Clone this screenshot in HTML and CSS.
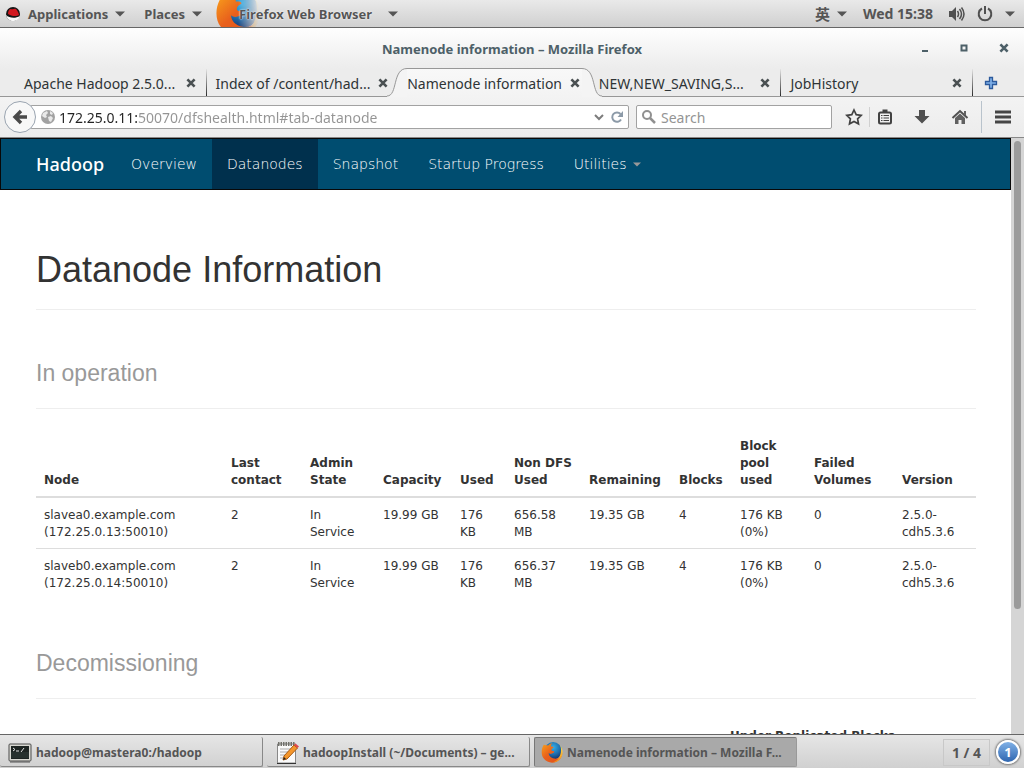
FILE: index.html
```html
<!DOCTYPE html>
<html lang="en">
<head>
<meta charset="utf-8">
<title>Namenode information</title>
<link rel="stylesheet" href="styles.css">
</head>
<body class="desktop">
<svg class="defs" aria-hidden="true">
  <defs>
    <radialGradient id="globe" cx="50%" cy="30%" r="65%"><stop offset="0" stop-color="#35b0e8"/><stop offset=".6" stop-color="#1f6fae"/><stop offset="1" stop-color="#173a74"/></radialGradient>
    <linearGradient id="fox" x1="0" y1="0" x2="1" y2="1"><stop offset="0" stop-color="#f9a11b"/><stop offset=".45" stop-color="#e8601c"/><stop offset="1" stop-color="#e0501a"/></linearGradient>
    <linearGradient id="foxtail" x1="0" y1="0" x2="0" y2="1"><stop offset="0" stop-color="#ffe14a"/><stop offset="1" stop-color="#f08a1c"/></linearGradient>
    <symbol id="firefox" viewBox="0 0 40 40">
      <circle cx="22" cy="18" r="16" fill="url(#globe)"/>
      <path d="M5 7C0 15 0 26 5 32c5 7 15 9 22 6 6-2 11-8 12-16-3 8-9 11-15 10-6-1-10-5-10-10 2 2 5 2 8 0 2-1 2-2 2-3-2-1-4 0-5-2 0-3 2-4 4-5 0-2-2-2-5-2 0-3 1-5 3-6-4 0-6 2-8 4-3-1-5 0-8-1Z" fill="url(#fox)"/>
      <path d="M35 8c4 5 5 11 4 16-2 9-9 15-18 15 7-2 12-7 14-14 2-6 2-11 0-17Z" fill="url(#foxtail)"/>
    </symbol>
    <symbol id="close" viewBox="0 0 10 10"><path d="M2 2l6 6M8 2l-6 6" stroke="currentColor" stroke-width="2.2"/></symbol>
    <symbol id="caret" viewBox="0 0 10 6"><path d="M0 .5h10L5 5.5z" fill="currentColor"/></symbol>
  </defs>
</svg>

<header class="panel">
  <button class="panel-item">
    <svg class="hat" viewBox="0 0 16 16"><circle cx="8" cy="8" r="7" fill="#161616"/><path d="M1 9c3 3 9 4 14 1-1 4-4 5-7 5S2 13 1 9Z" fill="#f8f8f8"/><path d="M3 8c0-3 1-5 3-5 2 1 3-1 5 0 2 2 3 5 3 6-3 2-8 1-11-1Z" fill="#d21920"/></svg>
    Applications <svg class="caret"><use href="#caret"/></svg>
  </button>
  <button class="panel-item">Places <svg class="caret"><use href="#caret"/></svg></button>
  <button class="panel-item app-menu">
    <svg class="app-icon"><use href="#firefox"/></svg>
    <span class="app-name">Firefox Web Browser</span> <svg class="caret"><use href="#caret"/></svg>
  </button>
  <div class="panel-right">
    <button class="panel-item ime">英 <svg class="caret"><use href="#caret"/></svg></button>
    <button class="panel-item clock">Wed 15:38</button>
    <button class="panel-item status" aria-label="System menu">
      <svg class="i16" viewBox="0 0 16 16"><path d="M0 5h3l4-4v14l-4-4H0z" fill="#505050"/><path d="M8.500 5q2 3 0 6M10.500 3q4 5 0 10M12.500 1.500q5 6.500 0 13" fill="none" stroke="#505050" stroke-width="1.500"/></svg>
      <svg class="i16 power" viewBox="0 0 16 16"><path d="M5 2.500a6.300 6.300 0 1 0 6 0M8 0v8" fill="none" stroke="#505050" stroke-width="2"/></svg>
      <svg class="caret"><use href="#caret"/></svg>
    </button>
  </div>
</header>

<main class="window">
  <div class="titlebar">
    <div class="title">Namenode information – Mozilla Firefox</div>
    <div class="win-buttons">
      <button class="bare" aria-label="Minimize"><svg class="i10" viewBox="0 0 10 10"><path d="M2 8h6" stroke="currentColor" stroke-width="2"/></svg></button>
      <button class="bare" aria-label="Maximize"><svg class="i10" viewBox="0 0 10 10"><path d="M2.500 2.500h5v5h-5z" fill="none" stroke="currentColor" stroke-width="2"/></svg></button>
      <button class="bare" aria-label="Close"><svg class="i12"><use href="#close"/></svg></button>
    </div>
  </div>

  <div class="tabs">
    <div class="tab sep"><a class="tab-label" href="#t1">Apache Hadoop 2.5.0...</a><button class="bare" aria-label="Close tab"><svg class="i12"><use href="#close"/></svg></button></div>
    <div class="tab"><a class="tab-label" href="#t2">Index of /content/had...</a><button class="bare" aria-label="Close tab"><svg class="i12"><use href="#close"/></svg></button></div>
    <div class="tab active">
      <div class="tab-shape">
        <svg class="tab-edge" viewBox="0 0 20 29"><path d="M0 28C11 28 5 .5 20 .5V29H0Z" fill="#f4f4f4"/><path d="M0 28C11 28 5 .5 20 .5" fill="none" stroke="#979797"/></svg>
        <div class="tab-mid"></div>
        <svg class="tab-edge" viewBox="0 0 20 29"><path d="M20 28C9 28 15 .5 0 .5V29H20Z" fill="#f4f4f4"/><path d="M20 28C9 28 15 .5 0 .5" fill="none" stroke="#979797"/></svg>
      </div>
      <a class="tab-label" href="#t3">Namenode information</a><button class="bare" aria-label="Close tab"><svg class="i12"><use href="#close"/></svg></button>
    </div>
    <div class="tab sep"><a class="tab-label" href="#t4">NEW,NEW_SAVING,S...</a><button class="bare" aria-label="Close tab"><svg class="i12"><use href="#close"/></svg></button></div>
    <div class="tab sep"><a class="tab-label" href="#t5">JobHistory</a><button class="bare" aria-label="Close tab"><svg class="i12"><use href="#close"/></svg></button></div>
    <button class="bare new-tab" aria-label="New tab"><svg class="i14" viewBox="0 0 14 14"><path d="M5.500 1.500h3v4h4v3h-4v4h-3v-4h-4v-3h4z" fill="#7fb0e8" stroke="#2c5a9c" stroke-width="1.300"/></svg></button>
  </div>

  <div class="toolbar">
    <button class="back" aria-label="Back"><svg class="i16" viewBox="0 0 16 16"><path d="M9 2L3 8l6 6M3 8h12" fill="none" stroke="#4a4a4a" stroke-width="3.400"/></svg></button>
    <div class="urlbar">
      <svg class="i16" viewBox="0 0 16 16"><circle cx="8" cy="8" r="7" fill="#a2a2a2"/><path d="M3 4l4-2 1 2-2 2 1 2-2 1-3-2ZM8 8l3-1 2 2-2 4-2-1ZM10 2l3 2-1 2-2-1Z" fill="#e9e9e9"/></svg>
      <input class="url" aria-label="Address" value="172.25.0.11:50070/dfshealth.html#tab-datanode">
      <button class="bare" aria-label="History"><svg class="i12" viewBox="0 0 12 12"><path d="M2 4l4 4 4-4" fill="none" stroke="#7c7c7c" stroke-width="2"/></svg></button>
      <button class="bare reload" aria-label="Reload"><svg class="i14" viewBox="0 0 14 14"><path d="M11 9.500A4.700 4.700 0 1 1 10.500 4" fill="none" stroke="#8c9aa8" stroke-width="2"/><path d="M13 1v6H7.500z" fill="#8c9aa8"/></svg></button>
    </div>
    <div class="search">
      <svg class="i16" viewBox="0 0 16 16"><circle cx="6" cy="6" r="4" fill="none" stroke="#909090" stroke-width="2"/><path d="M9 9l5 5" stroke="#909090" stroke-width="2.500"/></svg>
      <input class="search-input" aria-label="Search" placeholder="Search">
    </div>
    <div class="tools">
      <button class="bare tool star" aria-label="Bookmark"><svg class="i18" viewBox="0 0 18 18"><path d="M9 2l2.200 4.600 5 .7-3.600 3.500.9 5L9 13.400l-4.500 2.400.9-5L1.800 7.300l5-.7z" fill="none" stroke="#424242" stroke-width="1.700"/></svg></button>
      <button class="bare tool list" aria-label="Bookmarks list"><svg class="i18" viewBox="0 0 18 18"><rect x="3" y="4.500" width="12" height="11" rx="1.500" fill="none" stroke="#424242" stroke-width="2"/><path d="M6.500 1.500h5V5h-5z" fill="#424242"/><path d="M5 7.500h1.500M7.500 7.500H13M5 10h1.500M7.500 10H13M5 12.500h1.500M7.500 12.500H13" stroke="#424242" stroke-width="1.200"/></svg></button>
      <button class="bare tool" aria-label="Downloads"><svg class="i18" viewBox="0 0 18 18"><path d="M6 2h6v6h4.500L9 15.500 1.500 8H6z" fill="#505050"/></svg></button>
      <button class="bare tool" aria-label="Home"><svg class="i18" viewBox="0 0 18 18"><path d="M1.500 10L9 3l7.500 7" fill="none" stroke="#505050" stroke-width="2"/><path d="M13 3h2v4h-2zM4 10l5-4.500 5 4.500v6h-3.500v-4h-3v4H4z" fill="#606060"/></svg></button>
      <button class="bare tool menu" aria-label="Menu"><svg class="i18" viewBox="0 0 18 18"><path d="M1 4h16M1 9h16M1 14h16" stroke="#454545" stroke-width="3"/></svg></button>
    </div>
  </div>

  <div class="viewport">
    <div class="page">
      <nav class="navbar">
        <a class="brand" href="#">Hadoop</a>
        <a class="nav-link" href="#tab-overview">Overview</a>
        <a class="nav-link current" href="#tab-datanode">Datanodes</a>
        <a class="nav-link" href="#tab-snapshot">Snapshot</a>
        <a class="nav-link" href="#tab-startup-progress">Startup Progress</a>
        <a class="nav-link" href="#utilities">Utilities <svg class="nav-caret"><use href="#caret"/></svg></a>
      </nav>
      <div class="content">
        <h1 class="page-header">Datanode Information</h1>
        <h2 class="page-header sub">In operation</h2>
        <table class="nodes">
          <colgroup><col class="c-node"><col class="c-last"><col class="c-admin"><col class="c-cap"><col class="c-used"><col class="c-non"><col class="c-rem"><col class="c-blocks"><col class="c-pool"><col class="c-fail"><col class="c-ver"></colgroup>
          <thead><tr><th>Node</th><th>Last contact</th><th>Admin State</th><th>Capacity</th><th>Used</th><th>Non DFS Used</th><th>Remaining</th><th>Blocks</th><th>Block pool used</th><th>Failed Volumes</th><th>Version</th></tr></thead>
          <tbody>
            <tr><td>slavea0.example.com (172.25.0.13:50010)</td><td>2</td><td>In Service</td><td>19.99 GB</td><td>176 KB</td><td>656.58 MB</td><td>19.35 GB</td><td>4</td><td>176 KB (0%)</td><td>0</td><td>2.5.0-cdh5.3.6</td></tr>
            <tr><td>slaveb0.example.com (172.25.0.14:50010)</td><td>2</td><td>In Service</td><td>19.99 GB</td><td>176 KB</td><td>656.37 MB</td><td>19.35 GB</td><td>4</td><td>176 KB (0%)</td><td>0</td><td>2.5.0-cdh5.3.6</td></tr>
          </tbody>
        </table>
        <h2 class="page-header sub">Decomissioning</h2>
        <table class="nodes">
          <colgroup><col class="c-lead"><col></colgroup>
          <thead><tr><th></th><th>Under Replicated Blocks</th></tr></thead>
        </table>
      </div>
    </div>
    <div class="scrollbar"><div class="thumb"></div></div>
  </div>
</main>

<footer class="taskbar">
  <button class="task">
    <svg class="i24" viewBox="0 0 24 24"><rect x="1" y="3" width="22" height="17" rx="1" fill="#d8d8d2" stroke="#4c4c4c"/><rect x="3" y="5" width="18" height="13" fill="#1d2422"/><path d="M5 7l2 1.500L5 10M8 10h3M13 11l3-4" fill="none" stroke="#e4e4e4"/><path d="M3 12h18M3 14h18M3 16h18" stroke="#3d4a46" stroke-width=".7"/><path d="M2 21h20" stroke="#555"/></svg>
    <span class="task-label">hadoop@mastera0:/hadoop</span>
  </button>
  <button class="task">
    <svg class="i24" viewBox="0 0 24 24"><path d="M2.500 3h18v19h-18z" fill="#fafafa" stroke="#888"/><path d="M2 22.500h19" stroke="#333"/><path d="M3 3h17" stroke="#70706a" stroke-width="4" stroke-dasharray="1.500 1"/><path d="M5 8h12M5 11h10M5 14h7M5 17h5" stroke="#aaa"/><path d="M9 15L19 4l3.500 3L12 18l-4 1z" fill="#f4962b" stroke="#a85a12"/><path d="M19 4l1.500-1.500 3.500 3L22.500 7z" fill="#e0474b"/><path d="M8 19l1-3 2 2z" fill="#222"/></svg>
    <span class="task-label">hadoopInstall (~/Documents) – ge...</span>
  </button>
  <button class="task pressed">
    <svg class="i22"><use href="#firefox"/></svg>
    <span class="task-label">Namenode information – Mozilla F...</span>
  </button>
  <div class="pager-area">
    <button class="pager">1 / 4</button>
    <button class="badge">1</button>
  </div>
</footer>
</body>
</html>
```
FILE: styles.css
```css
* { box-sizing: border-box; }

.desktop {
  margin: 0;
  height: 100vh;
  display: flex;
  flex-direction: column;
  overflow: hidden;
  background: #fff;
  font-family: "Noto Sans", "Noto Sans CJK SC", sans-serif;
  font-size: 14px;
  color: #2e3436;
}
.defs { position: absolute; width: 0; height: 0; }
button { font: inherit; color: inherit; border: 0; background: none; padding: 0; }
a { color: inherit; text-decoration: none; }
svg { flex: none; display: block; }
.i10 { width: 10px; height: 10px; }
.i12 { width: 12px; height: 12px; }
.i14 { width: 14px; height: 14px; }
.i16 { width: 16px; height: 16px; }
.i18 { width: 18px; height: 18px; }
.i22 { width: 22px; height: 22px; }
.i24 { width: 24px; height: 24px; }
.caret { width: 10px; height: 6px; }
.bare { display: flex; align-items: center; justify-content: center; }

/* Top panel */
.panel {
  flex: none;
  height: 28px;
  display: flex;
  align-items: center;
  gap: 19px;
  padding: 0 9px 0 5px;
  border-bottom: 1px solid #666;
  background: linear-gradient(#e9e9e9, #d0d0d0);
  color: #555;
  font-size: 13px;
  font-weight: 700;
  text-shadow: 0 1px #f4f4f4;
}
.panel-item { display: flex; align-items: center; gap: 7px; height: 27px; white-space: nowrap; }
.hat { width: 16px; height: 16px; }
.app-menu { position: relative; padding-left: 38px; margin-left: -20px; overflow: hidden; }
.app-icon { position: absolute; left: 14px; top: -10px; width: 46px; height: 46px; -webkit-mask-image: linear-gradient(90deg, #000 50%, transparent 95%); mask-image: linear-gradient(90deg, #000 50%, transparent 95%); }
.app-name { position: relative; padding-right: 9px; text-shadow: 0 0 1px #fff, 0 0 2px #eee; }
.panel-right { margin-left: auto; display: flex; gap: 16px; }
.clock { font-size: 14px; }
.ime { font-size: 15px; }
.status { gap: 12px; }

/* Browser window */
.window { flex: 1; min-height: 0; display: flex; flex-direction: column; }
.titlebar {
  flex: none;
  height: 41px;
  display: grid;
  grid-template-columns: 1fr auto 1fr;
  align-items: center;
  background: linear-gradient(#fefefe, #ececec);
  color: #4d6068;
}
.title { grid-column: 2; font-size: 13px; font-weight: 700; }
.win-buttons { justify-self: end; display: flex; gap: 29px; padding: 0 14px 2px 0; }
.tabs {
  flex: none;
  height: 28px;
  display: grid;
  grid-template-columns: repeat(5, 1fr) 51px;
  padding-left: 15px;
  border-bottom: 1px solid #979797;
  background: #ececec;
  font-size: 14px;
}
.tab { position: relative; display: flex; align-items: center; justify-content: space-between; padding: 2px 9px 0; min-width: 0; }
.tab-label { white-space: nowrap; position: relative; }
.tab .bare { position: relative; padding-bottom: 2px; color: #4a5052; }
.sep { border-right: 1px solid; border-image: linear-gradient(#ececec, #222) 1; }
.active { z-index: 1; }
.tab-shape { position: absolute; inset: -1px -12px -1px -11px; display: flex; }
.tab-edge { width: 20px; height: 29px; }
.tab-mid { flex: 1; background: linear-gradient(#f8f8f8, #f3f3f3); border-top: 1px solid #979797; }
.new-tab { justify-self: start; padding-left: 11px; }

.toolbar {
  flex: none;
  height: 41px;
  display: flex;
  align-items: center;
  padding: 0 12px 0 4px;
  border-bottom: 1px solid #888;
  background: linear-gradient(#f3f3f3, #ececec);
}
.back {
  flex: none;
  width: 32px;
  height: 32px;
  display: flex;
  align-items: center;
  justify-content: center;
  border: 1px solid #9aa4b0;
  border-radius: 50%;
  background: #f8f8f8;
  z-index: 1;
}
.urlbar, .search { display: flex; align-items: center; height: 24px; border: 1px solid #a2a2a2; border-radius: 2px; background: #fff; }
.urlbar { flex: 1; margin: 0 7px 0 -6px; padding: 0 4px 0 9px; gap: 3px; }
.reload { margin-left: 2px; }
.url, .search-input { flex: 1; min-width: 0; border: 0; outline: 0; padding: 0; font: inherit; }
.url {
  color: transparent;
  background: linear-gradient(90deg, #222 79px, #949494 79px);
  -webkit-background-clip: text;
  background-clip: text;
}
.search { width: 196px; padding-left: 4px; gap: 4px; }
.search-input { background: none; }
.search-input::placeholder { color: #949494; opacity: 1; }
.tools { display: flex; align-items: center; }
.tool { height: 32px; width: 38px; }
.star { width: 37px; padding-left: 7px; }
.list { border-left: 1px solid #d0d0d0; width: 34px; height: 20px; padding-right: 4px; }
.menu { width: 37px; margin-left: 2px; border-left: 1px solid #b9c3cc; padding-left: 5px; margin-right: -6px; }

/* Page */
.viewport { flex: 1; min-height: 0; display: flex; }
.page { flex: 1; min-width: 0; overflow: hidden; font-family: "DejaVu Sans", sans-serif; color: #333; }
.navbar {
  display: flex;
  height: 52px;
  padding-left: 20px;
  border: 1px solid #080808;
  background: #004d70;
  color: #fff;
  font-size: 14px;
}
.brand, .nav-link { display: flex; align-items: center; padding: 0 15px; white-space: nowrap; }
.brand { padding-right: 12px; font-family: "Noto Sans", sans-serif; font-size: 18px; font-weight: 500; }
.nav-link { color: #fff; font-weight: 200; }
.current { background: #00304d; }
.nav-caret { width: 8px; height: 5px; margin-left: 6px; color: #999; }
.content { padding: 60px 35px 0 36px; }
.page-header {
  margin: 0;
  padding-bottom: 19px;
  border-bottom: 1px solid #eee;
  font-family: "Liberation Sans", sans-serif;
  font-size: 36px;
  line-height: 40px;
  font-weight: 400;
}
.sub { margin: 40px 0 20px; padding: 3px 0 15px; font-size: 23px; color: #999; }
.nodes { width: 100%; margin-bottom: 41px; table-layout: fixed; border-collapse: separate; border-spacing: 0; font-size: 12px; line-height: 17px; }
.nodes th, .nodes td { padding: 9px 8px 7px; text-align: left; }
.nodes th { vertical-align: bottom; border-bottom: 2px solid #ddd; }
.nodes td { vertical-align: top; }
.nodes tr + tr td { border-top: 1px solid #ddd; }
.c-node { width: 187px; }
.c-last { width: 79px; }
.c-admin { width: 73px; }
.c-cap { width: 77px; }
.c-used { width: 54px; }
.c-non { width: 75px; }
.c-rem { width: 90px; }
.c-blocks { width: 61px; }
.c-pool { width: 74px; }
.c-fail { width: 88px; }
.c-ver { width: 82px; }
.c-lead { width: 686px; }
.scrollbar { flex: none; width: 13px; padding: 3px 3px 0; background: #d5d5d5; }
.thumb { height: 79%; border-radius: 4px; background: #9b9b9b; }

/* Bottom window list */
.taskbar {
  flex: none;
  height: 34px;
  display: flex;
  gap: 4px;
  padding: 2px 4px 1px 0;
  border-top: 1px solid #666;
  background: linear-gradient(#e6e6e6, #d0d0d0);
  color: #555;
  font-size: 12px;
  font-weight: 700;
  text-shadow: 0 1px #eee;
}
.task {
  flex: 0 1 263px;
  min-width: 0;
  display: flex;
  align-items: center;
  gap: 4px;
  padding: 2px 7px 0 8px;
  border: 1px solid #888;
  border-width: 0 1px 1px 0;
  border-radius: 2px;
  white-space: nowrap;
}
.task-label { overflow: hidden; }
.pressed { padding: 0 6px; background: #a9a9a9; border-width: 1px; border-color: #777 #999 #999 #777; text-shadow: none; }
.pager-area { margin-left: auto; display: flex; align-items: center; gap: 6px; }
.pager { width: 47px; height: 27px; border: 1px solid #c8c8c8; font-size: 14px; }
.badge { width: 24px; height: 24px; border: 2px solid #fff; border-radius: 50%; background: linear-gradient(#7fb0e6, #2f66b0); box-shadow: 0 0 2px 1px #777; color: #fff; font-size: 13px; text-shadow: none; line-height: 20px; }
```
